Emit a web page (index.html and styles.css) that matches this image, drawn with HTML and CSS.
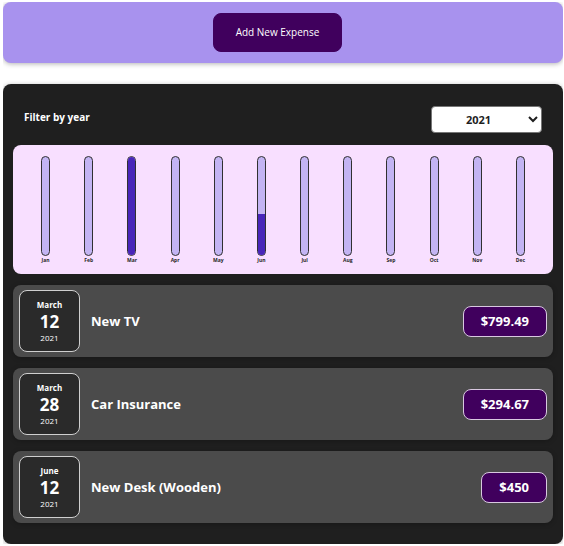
FILE: index.html
```html
<!DOCTYPE html>
<html lang="en">
<head>
<meta charset="utf-8">
<meta name="viewport" content="width=device-width, initial-scale=1">
<title>Expenses</title>
<link rel="stylesheet" href="styles.css">
</head>
<body>
<section class="new-expense">
  <button type="button" class="add-button">Add New Expense</button>
</section>
<main class="expenses">
  <div class="filter">
    <label class="filter-label" for="year">Filter by year</label>
    <select class="filter-select" id="year">
      <option>2022</option>
      <option selected>2021</option>
      <option>2020</option>
      <option>2019</option>
    </select>
  </div>
  <div class="chart">
    <div class="chart-bar"><div class="bar"><div class="bar-fill" style="height:0%"></div></div><span class="bar-label">Jan</span></div>
    <div class="chart-bar"><div class="bar"><div class="bar-fill" style="height:0%"></div></div><span class="bar-label">Feb</span></div>
    <div class="chart-bar"><div class="bar"><div class="bar-fill" style="height:100%"></div></div><span class="bar-label">Mar</span></div>
    <div class="chart-bar"><div class="bar"><div class="bar-fill" style="height:0%"></div></div><span class="bar-label">Apr</span></div>
    <div class="chart-bar"><div class="bar"><div class="bar-fill" style="height:0%"></div></div><span class="bar-label">May</span></div>
    <div class="chart-bar"><div class="bar"><div class="bar-fill" style="height:42%"></div></div><span class="bar-label">Jun</span></div>
    <div class="chart-bar"><div class="bar"><div class="bar-fill" style="height:0%"></div></div><span class="bar-label">Jul</span></div>
    <div class="chart-bar"><div class="bar"><div class="bar-fill" style="height:0%"></div></div><span class="bar-label">Aug</span></div>
    <div class="chart-bar"><div class="bar"><div class="bar-fill" style="height:0%"></div></div><span class="bar-label">Sep</span></div>
    <div class="chart-bar"><div class="bar"><div class="bar-fill" style="height:0%"></div></div><span class="bar-label">Oct</span></div>
    <div class="chart-bar"><div class="bar"><div class="bar-fill" style="height:0%"></div></div><span class="bar-label">Nov</span></div>
    <div class="chart-bar"><div class="bar"><div class="bar-fill" style="height:0%"></div></div><span class="bar-label">Dec</span></div>
  </div>
  <ul class="expense-list">
    <li class="expense">
      <div class="date"><span class="month">March</span><span class="day">12</span><span class="year">2021</span></div>
      <h2 class="title">New TV</h2>
      <div class="price">$799.49</div>
    </li>
    <li class="expense">
      <div class="date"><span class="month">March</span><span class="day">28</span><span class="year">2021</span></div>
      <h2 class="title">Car Insurance</h2>
      <div class="price">$294.67</div>
    </li>
    <li class="expense">
      <div class="date"><span class="month">June</span><span class="day">12</span><span class="year">2021</span></div>
      <h2 class="title">New Desk (Wooden)</h2>
      <div class="price">$450</div>
    </li>
  </ul>
</main>
</body>
</html>
```

FILE: styles.css
```css
* {
  box-sizing: border-box;
}

body {
  margin: 2px 1px 2px 3px;
  background: #fff;
  font-family: "Segoe UI", "Open Sans", "Noto Sans", sans-serif;
}

.new-expense {
  display: flex;
  justify-content: center;
  padding: 11px 22px 11px 11px;
  background: #a892ee;
  border-radius: 8px;
  box-shadow: 0 1px 5px rgba(0, 0, 0, 0.3);
}

.add-button {
  padding: 11px 22px;
  border: 1px solid #40005d;
  border-radius: 8px;
  background: #40005d;
  color: #fff;
  font: inherit;
  font-size: 10px;
  line-height: 15px;
}

.expenses {
  margin-top: 21px;
  padding: 11px 10px 21px;
  background: #1f1f1f;
  border-radius: 8px;
  box-shadow: 0 1px 5px rgba(0, 0, 0, 0.3);
}

.filter {
  display: flex;
  align-items: center;
  justify-content: space-between;
  padding: 11px 11px 12px;
}

.filter-label {
  padding-bottom: 5px;
  color: #fff;
  font-size: 10px;
  font-weight: 700;
  line-height: 16px;
}

.filter-select {
  width: 111px;
  height: 27px;
  padding: 0 6px 0 2px;
  border: 1px solid #767676;
  border-radius: 4px;
  background: #fff;
  color: #1f1f1f;
  font: inherit;
  font-size: 11px;
  font-weight: 700;
  text-align: center;
}

.chart {
  display: flex;
  padding: 11px 11px 9px;
  background: #f8dfff;
  border-radius: 8px;
}

.chart-bar {
  flex: 1;
  display: flex;
  flex-direction: column;
  align-items: center;
}

.bar {
  display: flex;
  flex-direction: column;
  justify-content: flex-end;
  width: 9px;
  height: 100px;
  overflow: hidden;
  border: 1px solid #313131;
  border-radius: 8px;
  background: #c3b4f3;
}

.bar-fill {
  background: #4826b9;
}

.bar-label {
  color: #1f1f1f;
  font-size: 5px;
  font-weight: 700;
  line-height: 9px;
}

.expense-list {
  display: flex;
  flex-direction: column;
  gap: 11px;
  margin: 11px 0 0;
  padding: 0;
  list-style: none;
}

.expense {
  display: flex;
  align-items: center;
  gap: 11px;
  padding: 5px 6px;
  background: #4b4b4b;
  border-radius: 8px;
  box-shadow: 0 1px 5px rgba(0, 0, 0, 0.25);
}

.date {
  display: flex;
  flex-direction: column;
  align-items: center;
  justify-content: center;
  width: 61px;
  height: 62px;
  border: 1px solid #cfcfcf;
  border-radius: 8px;
  background: #2a2a2a;
  color: #fff;
}

.month {
  font-size: 8px;
  font-weight: 700;
  line-height: 12px;
}

.day {
  font-size: 17px;
  font-weight: 700;
  line-height: 21px;
}

.year {
  font-size: 8px;
  line-height: 12px;
}

.title {
  flex: 1;
  margin: 0;
  color: #fff;
  font-size: 13px;
  font-weight: 700;
  line-height: 20px;
}

.price {
  padding: 5px 17px;
  border: 1px solid #d8c8e0;
  border-radius: 8px;
  background: #40005d;
  color: #fff;
  font-size: 13px;
  font-weight: 700;
  line-height: 19px;
}
```
